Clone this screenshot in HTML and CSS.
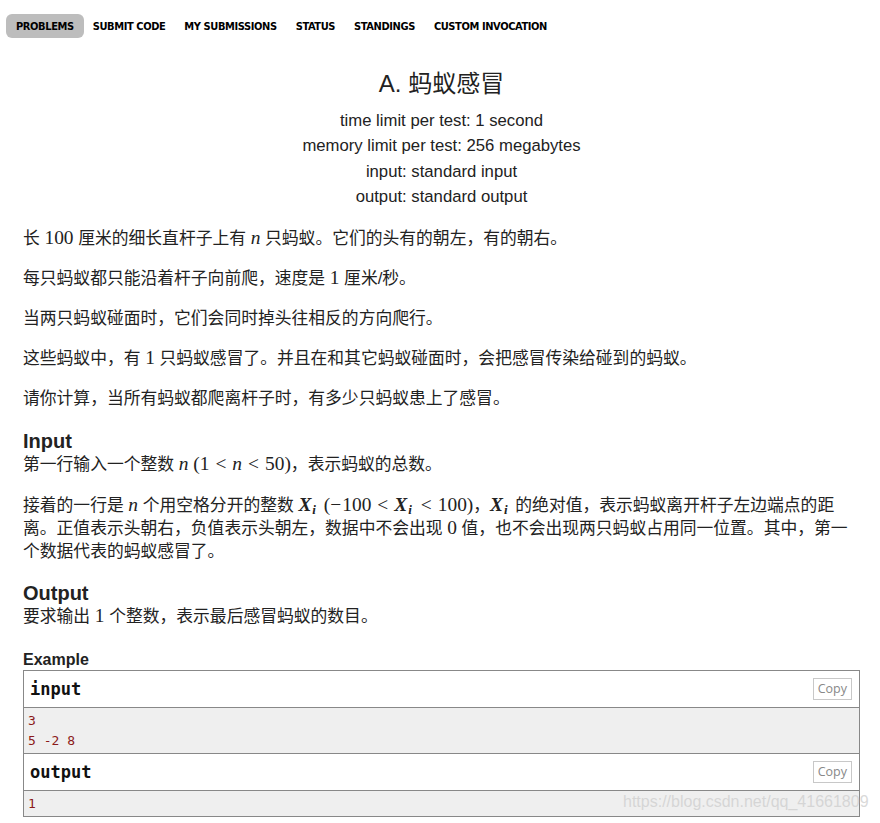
FILE: index.html
```html
<!DOCTYPE html>
<html lang="zh">
<head>
<meta charset="utf-8">
<title>A. 蚂蚁感冒</title>
<link rel="stylesheet" href="styles.css">
</head>
<body>
<nav class="nav">
  <a class="nav-item active">PROBLEMS</a>
  <a class="nav-item">SUBMIT CODE</a>
  <a class="nav-item">MY SUBMISSIONS</a>
  <a class="nav-item">STATUS</a>
  <a class="nav-item">STANDINGS</a>
  <a class="nav-item">CUSTOM INVOCATION</a>
</nav>
<main class="problem">
  <header class="header">
    <h1 class="title">A. 蚂蚁感冒</h1>
    <div class="limits">
      <div>time limit per test: 1 second</div>
      <div>memory limit per test: 256 megabytes</div>
      <div>input: standard input</div>
      <div>output: standard output</div>
    </div>
  </header>
  <section class="statement">
    <p>长 <span class="m">100</span> 厘米的细长直杆子上有 <span class="m i">n</span> 只蚂蚁。它们的头有的朝左，有的朝右。</p>
    <p>每只蚂蚁都只能沿着杆子向前爬，速度是 <span class="m">1</span> 厘米/秒。</p>
    <p>当两只蚂蚁碰面时，它们会同时掉头往相反的方向爬行。</p>
    <p>这些蚂蚁中，有 <span class="m">1</span> 只蚂蚁感冒了。并且在和其它蚂蚁碰面时，会把感冒传染给碰到的蚂蚁。</p>
    <p>请你计算，当所有蚂蚁都爬离杆子时，有多少只蚂蚁患上了感冒。</p>
  </section>
  <section class="spec">
    <h2 class="section-title">Input</h2>
    <p>第一行输入一个整数 <span class="m"><span class="i">n</span> (1<span class="rel">&lt;</span><span class="i">n</span><span class="rel">&lt;</span>50)</span>，表示蚂蚁的总数。</p>
    <p>接着的一行是 <span class="m i">n</span> 个用空格分开的整数 <span class="m"><span class="i b">X<sub>i</sub></span> (<span class="minus">−</span>100<span class="rel">&lt;</span><span class="i b">X<sub>i</sub></span><span class="rel">&lt;</span>100)</span>，<span class="m i b">X<sub>i</sub></span> 的绝对值，表示蚂蚁离开杆子左边端点的距离。正值表示头朝右，负值表示头朝左，数据中不会出现 <span class="m">0</span> 值，也不会出现两只蚂蚁占用同一位置。其中，第一个数据代表的蚂蚁感冒了。</p>
  </section>
  <section class="spec">
    <h2 class="section-title">Output</h2>
    <p>要求输出 <span class="m">1</span> 个整数，表示最后感冒蚂蚁的数目。</p>
  </section>
  <section class="example">
    <h3 class="example-title">Example</h3>
    <div class="sample">
      <div class="sample-head"><span class="sample-label">input</span><span class="copy">Copy</span></div>
      <pre class="sample-body">3
5 -2 8</pre>
      <div class="sample-head"><span class="sample-label">output</span><span class="copy">Copy</span></div>
      <pre class="sample-body">1</pre>
    </div>
  </section>
</main>
<div class="watermark">https://blog.csdn.net/qq_41661809</div>
</body>
</html>
```

FILE: styles.css
```css
html, body {
  margin: 0;
  padding: 0;
  background: #fff;
}
body {
  font-family: "Liberation Sans", Arial, "Noto Sans CJK SC", sans-serif;
  color: #222;
  position: relative;
  min-height: 823px;
}
.nav {
  display: flex;
  padding: 14px 0 0 6px;
}
.nav-item {
  display: block;
  height: 24px;
  line-height: 25px;
  padding: 0 10px;
  margin-right: -1px;
  border-radius: 6px;
  font-family: "DejaVu Sans Condensed", "DejaVu Sans", sans-serif;
  font-weight: bold;
  font-size: 11px;
  letter-spacing: -0.4px;
  color: #000;
}
.nav-item.active {
  background: #bdbdbd;
}
.problem {
  padding: 0 20px 0 23px;
}
.header {
  text-align: center;
}
.title {
  margin: 30px 0 0;
  font-size: 24px;
  line-height: 31px;
  font-weight: normal;
  color: #222;
  font-family: "Liberation Sans", "Noto Sans CJK SC", sans-serif;
}
.limits {
  margin-top: 9px;
  font-size: 16.7px;
  line-height: 25.3px;
}
.statement {
  margin-top: 18px;
}
p {
  margin: 0 0 17px;
  font-size: 16.8px;
  line-height: 23px;
  font-family: "Liberation Sans", "Noto Sans CJK SC", sans-serif;
}
.m {
  font-family: "Liberation Serif", "DejaVu Serif", serif;
  font-size: 19.4px;
  line-height: 1;
}
.rel {
  margin: 0 6px;
}
.minus {
  margin-right: 1px;
}
.i {
  font-style: italic;
}
.b {
  font-weight: bold;
}
.m sub {
  font-size: 13px;
  vertical-align: -3px;
  line-height: 0;
  margin: 0 3px 0 1px;
}
.spec {
  margin-top: 20px;
}
.spec p {
  margin-bottom: 18px;
}
.spec p:last-child {
  margin-bottom: 0;
}
.spec + .spec {
  margin-top: 19px;
}
.section-title {
  margin: 0;
  font-size: 20px;
  line-height: 23px;
  font-weight: bold;
  color: #222;
}
.example {
  margin-top: 22px;
}
.example-title {
  margin: 0 0 1px;
  font-size: 16px;
  line-height: 19px;
  font-weight: bold;
}
.sample {
  border: 1px solid #888;
}
.sample-head {
  display: flex;
  align-items: center;
  justify-content: space-between;
  height: 36px;
  padding: 0 7px 0 6px;
  background: #fff;
  border-bottom: 1px solid #888;
}
.sample-label {
  font-family: "DejaVu Sans Mono", monospace;
  font-weight: bold;
  font-size: 17px;
  color: #111;
}
.copy {
  display: block;
  border: 1px solid #c8c8c8;
  padding: 0 4px;
  height: 20px;
  line-height: 20px;
  font-family: "Open Sans", sans-serif;
  font-size: 12.5px;
  color: #888;
}
.sample-body {
  margin: 0;
  padding: 3px 4px 2px 4px;
  background: #efefef;
  font-family: "DejaVu Sans Mono", monospace;
  font-size: 13px;
  line-height: 20px;
  color: #8b1a1a;
  border-bottom: 1px solid #888;
}
.sample-body:last-child {
  border-bottom: none;
}
.watermark {
  position: absolute;
  left: 623px;
  top: 793px;
  font-family: "Liberation Sans", sans-serif;
  font-size: 16px;
  color: rgba(205, 205, 205, 0.75);
  white-space: nowrap;
}
```
